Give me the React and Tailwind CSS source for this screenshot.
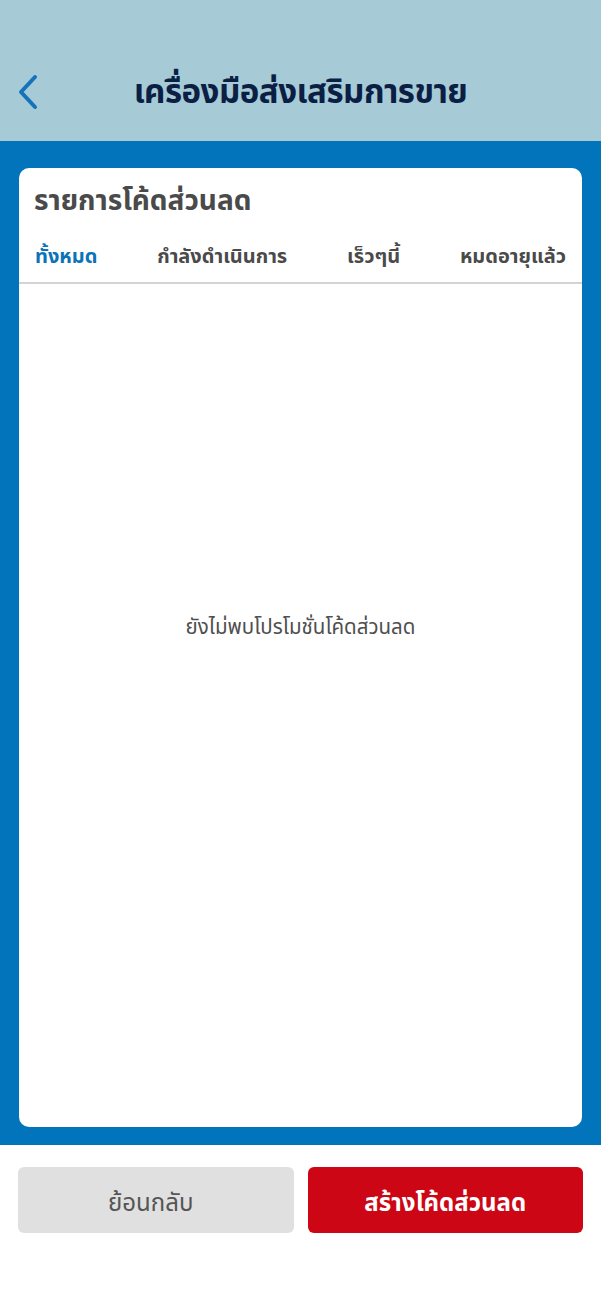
export default function App() {
  const font = { fontFamily: '"Noto Sans", "Noto Sans Thai", "Open Sans", sans-serif' };
  return (
    <div className="w-[601px] h-[1299px] flex flex-col bg-white" style={font}>
      <header className="h-[141px] bg-[#a6cad6] flex items-center relative shrink-0">
        <div className="absolute left-[16px] top-[74px]">
          <svg width="24" height="36" viewBox="0 0 24 36" fill="none">
            <path d="M19 3 L5 18 L19 33" stroke="#1673b9" strokeWidth="4" strokeLinecap="round" strokeLinejoin="round" />
          </svg>
        </div>
        <h1 className="w-full text-center pt-[41px] text-[33px] font-bold text-[#0b1f45] tracking-[-0.5px]">
          เครื่องมือส่งเสริมการขาย
        </h1>
      </header>
      <main className="bg-[#0174bc] h-[1004px] px-[19px] pt-[27px] pb-[18px] flex shrink-0">
        <div className="bg-white rounded-[10px] flex-1 flex flex-col overflow-hidden">
          <h2 className="px-[15px] pt-[11px] text-[28px] font-bold text-[#4a4a4a] leading-[40px]">
            รายการโค้ดส่วนลด
          </h2>
          <div className="flex justify-between items-center px-[16px] pt-[16px] h-[65px] pb-[5px] border-b-2 border-[#d4d4d4] text-[20px] font-bold text-[#4a4a4a]">
            <span className="text-[#0b73b8]">ทั้งหมด</span>
            <span>กำลังดำเนินการ</span>
            <span>เร็วๆนี้</span>
            <span>หมดอายุแล้ว</span>
          </div>
          <div className="flex-1 flex items-center justify-center pb-[158px]">
            <p className="text-[20.5px] text-[#4f4f4f]">ยังไม่พบโปรโมชั่นโค้ดส่วนลด</p>
          </div>
        </div>
      </main>
      <footer className="grid grid-cols-2 gap-[14px] px-[18px] pt-[22px]">
        <button className="h-[66px] rounded-[6px] bg-[#e0e0e0] text-[24px] text-[#555555] pt-[4px] pr-[10px]">
          ย้อนกลับ
        </button>
        <button className="h-[66px] rounded-[6px] bg-[#cc0615] text-[24px] font-bold text-white pt-[4px]">
          สร้างโค้ดส่วนลด
        </button>
      </footer>
    </div>
  );
}
